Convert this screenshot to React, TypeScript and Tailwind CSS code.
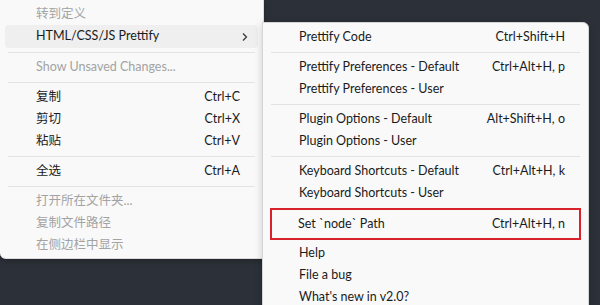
import { ReactNode } from 'react'

type Item =
  | { sep: true }
  | { label: string; keys?: string; disabled?: boolean; hover?: boolean; arrow?: boolean; marked?: boolean }

const leftItems: Item[] = [
  { label: '转到定义', disabled: true },
  { label: 'HTML/CSS/JS Prettify', hover: true, arrow: true },
  { sep: true },
  { label: 'Show Unsaved Changes...', disabled: true },
  { sep: true },
  { label: '复制', keys: 'Ctrl+C' },
  { label: '剪切', keys: 'Ctrl+X' },
  { label: '粘贴', keys: 'Ctrl+V' },
  { sep: true },
  { label: '全选', keys: 'Ctrl+A' },
  { sep: true },
  { label: '打开所在文件夹...', disabled: true },
  { label: '复制文件路径', disabled: true },
  { label: '在侧边栏中显示', disabled: true }
]

const rightItems: Item[] = [
  { label: 'Prettify Code', keys: 'Ctrl+Shift+H' },
  { sep: true },
  { label: 'Prettify Preferences - Default', keys: 'Ctrl+Alt+H, p' },
  { label: 'Prettify Preferences - User' },
  { sep: true },
  { label: 'Plugin Options - Default', keys: 'Alt+Shift+H, o' },
  { label: 'Plugin Options - User' },
  { sep: true },
  { label: 'Keyboard Shortcuts - Default', keys: 'Ctrl+Alt+H, k' },
  { label: 'Keyboard Shortcuts - User' },
  { label: 'Set `node` Path', keys: 'Ctrl+Alt+H, n', marked: true },
  { label: 'Help' },
  { label: 'File a bug' },
  { label: "What's new in v2.0?" }
]

function Row({ item }: { item: Exclude<Item, { sep: true }> }) {
  if (item.hover) {
    return (
      <div className="mx-[5px] flex h-[23px] items-center rounded-[4px] bg-[#efefef] pl-[31px] pr-[9px] text-[#1b1b1b]">
        <span>{item.label}</span>
        <svg width="8" height="10" viewBox="0 0 8 10" className="ml-auto">
          <path d="M2 1.5 L5.5 5 L2 8.5" fill="none" stroke="#333" strokeWidth="1.2" />
        </svg>
      </div>
    )
  }
  return (
    <div
      className={`flex h-[22px] items-center justify-between pl-[36px] pr-[23px] ${
        item.disabled ? 'text-[#a3a3a3]' : 'text-[#1b1b1b]'
      }`}
    >
      <span>{item.label}</span>
      {item.keys && <span>{item.keys}</span>}
    </div>
  )
}

function Menu({ items }: { items: Item[] }) {
  const out: ReactNode[] = []
  items.forEach((item, i) => {
    if ('sep' in item) {
      out.push(
        <div key={i} className="flex h-[8px] items-center px-[8px]">
          <div className="h-px w-full bg-[#e3e3e3]" />
        </div>
      )
    } else if (item.marked) {
      // annotation box drawn round the row
      out.push(
        <div key={i} className="mx-[7px] mt-[4px] mb-[2px] flex h-[32px] items-center border-2 border-[#d8222b]">
          <div className="flex h-[22px] w-full items-center justify-between pl-[26px] pr-[14px] text-[#1b1b1b]">
            <span>{item.label}</span>
            <span>{item.keys}</span>
          </div>
        </div>
      )
    } else {
      out.push(<Row key={i} item={item} />)
    }
  })
  return <>{out}</>
}

export default function App() {
  return (
    <main
      className="flex h-[305px] w-[600px] items-start overflow-hidden bg-[#2c3038] text-[12.5px]"
      style={{ fontFamily: 'Lato, "Noto Sans CJK SC", sans-serif' }}
    >
      <div className="w-[264px] shrink-0 rounded-bl-[6px] border-r border-b border-[#dcdcdc] bg-[#f9f9f9] pt-[3px] pb-[2px] shadow-[0_2px_6px_rgba(0,0,0,0.25)]">
        <Menu items={leftItems} />
      </div>
      <div className="relative z-10 ml-[-2px] mt-[22px] h-[300px] w-[327px] shrink-0 rounded-tr-[6px] border border-[#d6d6d6] bg-[#f9f9f9] pt-[3px] shadow-[0_2px_8px_rgba(0,0,0,0.18)]">
        <Menu items={rightItems} />
      </div>
    </main>
  )
}
